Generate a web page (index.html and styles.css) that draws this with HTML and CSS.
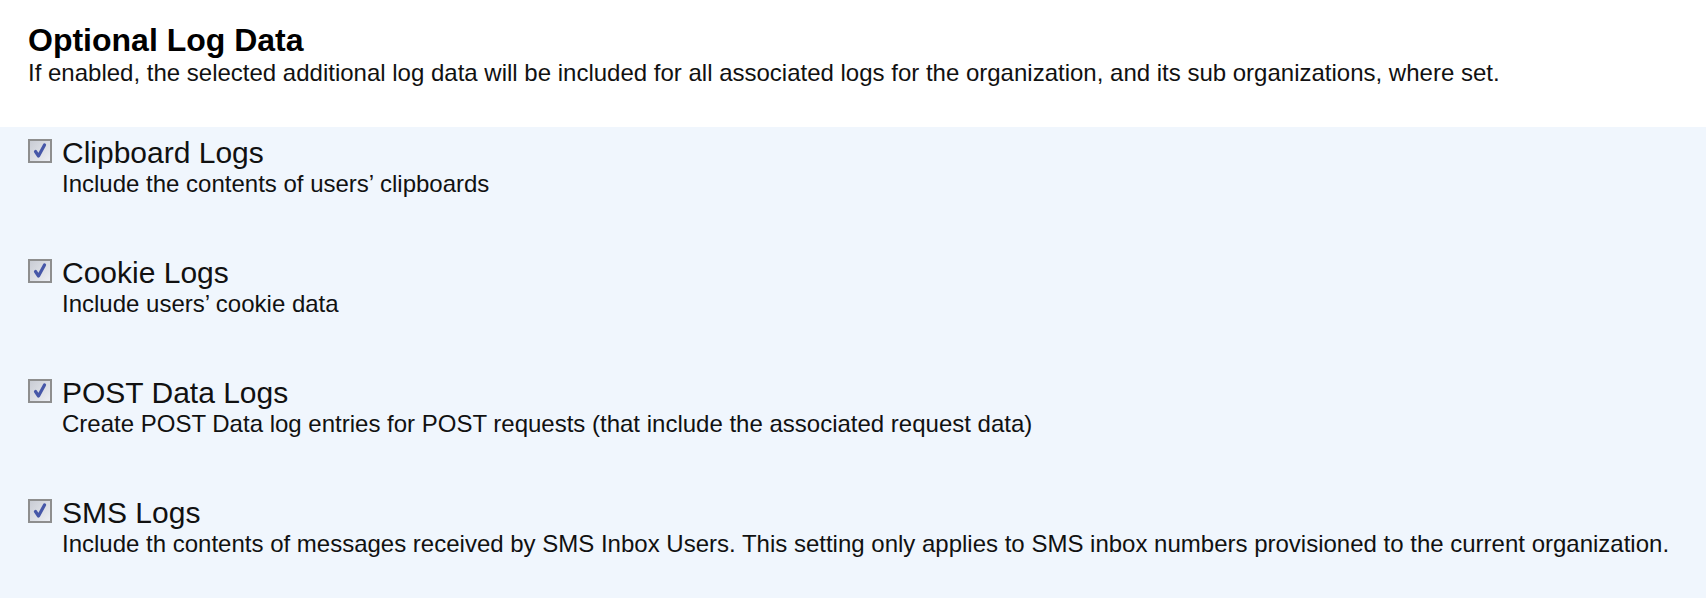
FILE: index.html
```html
<!DOCTYPE html>
<html>
<head>
<meta charset="utf-8">
<link rel="stylesheet" href="styles.css">
</head>
<body>
<svg class="defs" width="0" height="0"><defs><linearGradient id="g" x1="0" y1="0" x2="1" y2="1"><stop offset="0" stop-color="#c9ccd4"/><stop offset="1" stop-color="#eceef3"/></linearGradient></defs></svg>
<div class="header">
  <h1 class="title">Optional Log Data</h1>
  <p class="subtitle">If enabled, the selected additional log data will be included for all associated logs for the organization, and its sub organizations, where set.</p>
</div>
<div class="options">
  <div class="option">
    <span class="check"><svg viewBox="0 0 24 24" width="24" height="24"><rect x="0" y="0" width="24" height="24" fill="#8e8e8e"/><rect x="2" y="2" width="20" height="20" fill="url(#g)"/><path d="M7.5 12.5 L10.5 17 L16.5 6" fill="none" stroke="#4657a8" stroke-width="3.2" stroke-linecap="round" stroke-linejoin="round"/></svg></span>
    <div class="text">
      <div class="label">Clipboard Logs</div>
      <div class="desc">Include the contents of users’ clipboards</div>
    </div>
  </div>
  <div class="option">
    <span class="check"><svg viewBox="0 0 24 24" width="24" height="24"><rect x="0" y="0" width="24" height="24" fill="#8e8e8e"/><rect x="2" y="2" width="20" height="20" fill="url(#g)"/><path d="M7.5 12.5 L10.5 17 L16.5 6" fill="none" stroke="#4657a8" stroke-width="3.2" stroke-linecap="round" stroke-linejoin="round"/></svg></span>
    <div class="text">
      <div class="label">Cookie Logs</div>
      <div class="desc">Include users’ cookie data</div>
    </div>
  </div>
  <div class="option">
    <span class="check"><svg viewBox="0 0 24 24" width="24" height="24"><rect x="0" y="0" width="24" height="24" fill="#8e8e8e"/><rect x="2" y="2" width="20" height="20" fill="url(#g)"/><path d="M7.5 12.5 L10.5 17 L16.5 6" fill="none" stroke="#4657a8" stroke-width="3.2" stroke-linecap="round" stroke-linejoin="round"/></svg></span>
    <div class="text">
      <div class="label">POST Data Logs</div>
      <div class="desc">Create POST Data log entries for POST requests (that include the associated request data)</div>
    </div>
  </div>
  <div class="option">
    <span class="check"><svg viewBox="0 0 24 24" width="24" height="24"><rect x="0" y="0" width="24" height="24" fill="#8e8e8e"/><rect x="2" y="2" width="20" height="20" fill="url(#g)"/><path d="M7.5 12.5 L10.5 17 L16.5 6" fill="none" stroke="#4657a8" stroke-width="3.2" stroke-linecap="round" stroke-linejoin="round"/></svg></span>
    <div class="text">
      <div class="label">SMS Logs</div>
      <div class="desc">Include th contents of messages received by SMS Inbox Users. This setting only applies to SMS inbox numbers provisioned to the current organization.</div>
    </div>
  </div>
</div>
</body>
</html>
```
FILE: styles.css
```css
html, body {
  margin: 0;
  padding: 0;
  background: #ffffff;
  font-family: "Liberation Sans", Arial, sans-serif;
  color: #111111;
}
.defs {
  position: absolute;
  width: 0;
  height: 0;
}
.header {
  padding: 22px 28px 40px 28px;
}
.title {
  margin: 0;
  font-size: 32px;
  font-weight: bold;
  line-height: 37px;
  color: #000;
}
.subtitle {
  margin: 0;
  font-size: 24px;
  line-height: 28px;
}
.options {
  background: #f0f6fd;
  padding: 8px 28px 40px 28px;
  display: flex;
  flex-direction: column;
  gap: 57px;
}
.option {
  display: flex;
  align-items: flex-start;
  gap: 10px;
}
.check {
  display: block;
  width: 24px;
  height: 24px;
  margin-top: 4px;
  flex: none;
}
.check svg {
  display: block;
}
.label {
  font-size: 30px;
  line-height: 35px;
}
.desc {
  font-size: 24px;
  line-height: 28px;
}
```
